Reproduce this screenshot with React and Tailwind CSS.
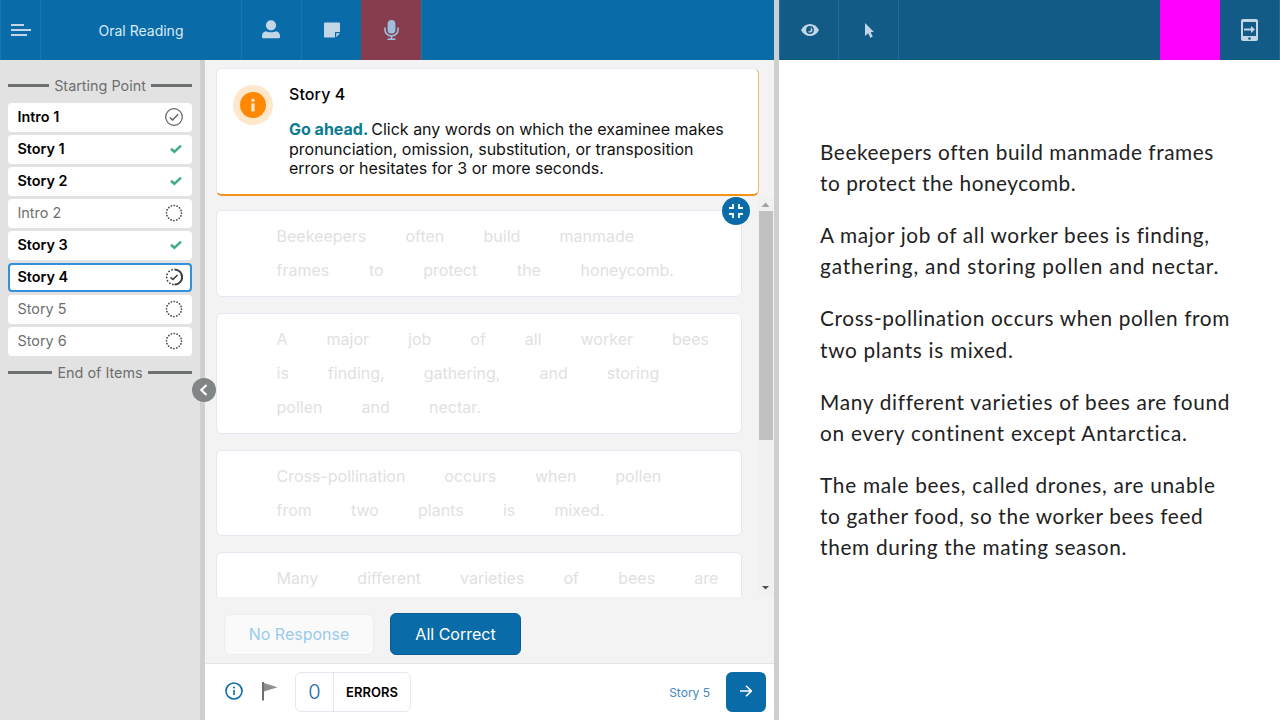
import React from "react";

const items = [
  { label: "Intro 1", state: "seen" },
  { label: "Story 1", state: "done" },
  { label: "Story 2", state: "done" },
  { label: "Intro 2", state: "todo" },
  { label: "Story 3", state: "done" },
  { label: "Story 4", state: "current" },
  { label: "Story 5", state: "todo" },
  { label: "Story 6", state: "todo" },
];

const sentences = [
  [
    ["Beekeepers often build manmade", "gap-[39.2px]"],
    ["frames to protect the honeycomb.", "gap-[39.7px]"],
  ],
  [
    ["A major job of all worker bees", "gap-[39px]"],
    ["is finding, gathering, and storing", "gap-[39px]"],
    ["pollen and nectar.", "gap-[39.2px]"],
  ],
  [
    ["Cross-pollination occurs when pollen", "gap-[38.9px]"],
    ["from two plants is mixed.", "gap-[39.2px]"],
  ],
  [["Many different varieties of bees are", "gap-[39.2px]"]],
];

const passage = [
  [
    ["Beekeepers often build manmade frames", "tracking-[0.58px]"],
    ["to protect the honeycomb.", "tracking-[0.54px]"],
  ],
  [
    ["A major job of all worker bees is finding,", "tracking-[0.66px]"],
    ["gathering, and storing pollen and nectar.", "tracking-[0.82px]"],
  ],
  [
    ["Cross-pollination occurs when pollen from", "tracking-[0.62px]"],
    ["two plants is mixed.", "tracking-[0.69px]"],
  ],
  [
    ["Many different varieties of bees are found", "tracking-[0.69px]"],
    ["on every continent except Antarctica.", "tracking-[0.77px]"],
  ],
  [
    ["The male bees, called drones, are unable", "tracking-[0.73px]"],
    ["to gather food, so the worker bees feed", "tracking-[0.63px]"],
    ["them during the mating season.", "tracking-[0.69px]"],
  ],
];

function StateIcon({ state }) {
  if (state === "done")
    return (
      <svg className="mr-[1px] h-3 w-3" viewBox="0 0 12 12" fill="none">
        <path d="M1 5.8L4.4 8.8L11 2.6" stroke="#40ad80" strokeWidth="2.5" />
      </svg>
    );
  if (state === "seen")
    return (
      <svg className="h-[18px] w-[18px]" viewBox="0 0 18 18" fill="none" stroke="#5f6363">
        <circle cx="9" cy="9" r="8.3" strokeWidth="1.2" />
        <path d="M4.8 9.5L7.5 12L13.2 6.3" strokeWidth="1.5" />
      </svg>
    );
  if (state === "current")
    return (
      <svg className="h-[18px] w-[18px]" viewBox="0 0 18 18" fill="none" stroke="#3d3d3d">
        <path d="M9.5 1.4A7.6 7.6 0 0 1 9.5 16.6" strokeWidth="2" />
        <path d="M8 16.5A7.6 7.6 0 0 1 8 1.5" strokeWidth="1.7" strokeLinecap="round" strokeDasharray="0.2 3.1" />
        <path d="M5.6 9.3L8 11.5L12.5 7" strokeWidth="1.6" />
      </svg>
    );
  return (
    <svg className="h-[18px] w-[18px]" viewBox="0 0 18 18" fill="none">
      <circle cx="9" cy="9" r="7.5" stroke="#444" strokeWidth="1.7" strokeLinecap="round" strokeDasharray="0.1 2.845" />
    </svg>
  );
}

function Marker({ children }) {
  return (
    <div className="flex h-[17px] items-center gap-[5px] text-[14.4px] leading-[17px] text-[#6d7070]">
      <span className="h-[3px] flex-1 bg-[#6d7070]" />
      <span>{children}</span>
      <span className="h-[3px] flex-1 bg-[#6d7070]" />
    </div>
  );
}

function Sidebar() {
  return (
    <aside className="relative h-full w-[205px] shrink-0 border-r-[5px] border-[#cfcfcf] bg-[#e2e2e2] px-2 pt-[16.5px]">
      <Marker>Starting Point</Marker>
      <ul className="mt-[9px] flex flex-col gap-[3px]">
        {items.map((it) => (
          <li
            key={it.label}
            className={
              "flex h-[29px] items-center justify-between rounded-[4px] border-2 bg-white pl-[7.5px] pr-[7px] text-[14.4px] leading-none " +
              (it.state === "current" ? "border-[#3490dc] " : "border-white ") +
              (it.state === "todo" ? "text-[#6d7070]" : "font-semibold text-black")
            }
          >
            <span>{it.label}</span>
            <StateIcon state={it.state} />
          </li>
        ))}
      </ul>
      <div className="mt-2">
        <Marker>End of Items</Marker>
      </div>
      <button className="absolute left-[192px] top-[317.5px] z-10 flex h-6 w-6 items-center justify-center rounded-full bg-[#828585]">
        <svg className="h-3 w-3" viewBox="0 0 12 12" fill="none">
          <path d="M8.5 1L3.3 6L8.5 11" stroke="#fff" strokeWidth="2.2" />
        </svg>
      </button>
    </aside>
  );
}

function TopBar() {
  return (
    <header className="flex h-[60px] shrink-0 bg-[#096ca9] text-[#c3d6e5]">
      <div className="flex w-[41px] items-center justify-center border-x border-[#1b77b1]">
        <svg className="h-3 w-5" viewBox="0 0 20 12">
          <path d="M0 1h13M0 6h20M0 11h16" stroke="currentColor" strokeWidth="1.8" />
        </svg>
      </div>
      <div className="flex w-[201px] items-center justify-center border-r border-[#1b77b1] text-[14px] text-[#dceaf5]">
        Oral Reading
      </div>
      <div className="flex w-[60px] items-center justify-center border-r border-[#1b77b1] pr-[2px]">
        <svg className="mt-[-2px] h-[19px] w-[18px]" viewBox="0 0 18 19" fill="currentColor">
          <circle cx="9" cy="5.3" r="5.1" />
          <path d="M4.2 11.2C6 12.5 12 12.5 13.8 11.2C16.5 11.6 18 13.4 18 16V17Q18 18.2 16.8 18.2H1.2Q0 18.2 0 17V16C0 13.4 1.5 11.6 4.2 11.2Z" />
        </svg>
      </div>
      <div className="flex w-[59px] items-center justify-center">
        <svg className="h-4 w-4" viewBox="0 0 16 16" fill="currentColor">
          <path d="M1 0.5H15Q16 0.5 16 1.5V10H11V15.5H1Q0 15.5 0 14.5V1.5Q0 0.5 1 0.5Z" />
          <path d="M12.2 11.2H16L12.2 15.2Z" />
        </svg>
      </div>
      <div className="flex w-[61px] items-center justify-center border-r border-[#1b77b1] bg-[#873d4e] text-[#9dbfdc]">
        <svg className="h-5 w-[15px]" viewBox="0 0 15 20">
          <rect x="3.6" y="0" width="7.8" height="13.6" rx="3.9" fill="currentColor" />
          <path d="M1 7.5V10A6.5 5.9 0 0 0 14 10V7.5M7.5 16V19M3.5 19.2H11.5" fill="none" stroke="currentColor" strokeWidth="1.6" />
        </svg>
      </div>
    </header>
  );
}

function InfoCard() {
  return (
    <section className="ml-[11px] mt-2 flex h-32 w-[543px] shrink-0 rounded-[6px] border border-[#e5e8f2] border-b-2 border-r-[#f3b871] border-b-[#f39320] bg-white">
      <div className="ml-4 mt-4 flex h-10 w-10 shrink-0 items-center justify-center rounded-full bg-[#ffe7cc]">
        <svg className="h-[26px] w-[26px]" viewBox="0 0 26 26">
          <circle cx="13" cy="13" r="13" fill="#ff8800" />
          <circle cx="13" cy="8.3" r="1.7" fill="#ffe7cc" />
          <rect x="11.4" y="11.4" width="3.2" height="8" fill="#ffe7cc" />
        </svg>
      </div>
      <div className="ml-4 flex flex-col pt-[15px]">
        <h1 className="text-[16px] font-medium leading-5 tracking-[0.1px] text-black">Story 4</h1>
        <div className="mt-4 whitespace-nowrap text-[16px] leading-[19.5px] text-[#111]">
          <p>
            <b className="mr-[3px] text-[#0a7d90]">Go ahead.</b>
            Click any words on which the examinee makes
          </p>
          <p>pronunciation, omission, substitution, or transposition</p>
          <p>errors or hesitates for 3 or more seconds.</p>
        </div>
      </div>
    </section>
  );
}

function WordArea() {
  return (
    <div className="relative h-[401px] shrink-0">
      <div className="flex h-full justify-between overflow-hidden pl-[11px]">
        <div className="flex w-[526px] flex-col gap-4 pt-[14px]">
          {sentences.map((lines) => (
            <div
              key={lines[0][0]}
              className="shrink-0 rounded-[6px] border border-[#e5e8f2] bg-white py-2 pl-[59.5px] last:h-[87px]"
            >
              {lines.map(([line, gap]) => (
                <div key={line} className={"flex h-[34.33px] items-center whitespace-nowrap text-[16px] text-[#e1e1e1] " + gap}>
                  {line.split(" ").map((w, i) => (
                    <span key={i}>{w}</span>
                  ))}
                </div>
              ))}
            </div>
          ))}
        </div>
        <div className="mr-px flex w-[15px] flex-col items-center bg-[#f1f1f1]">
          <svg className="h-[15px] w-[15px] shrink-0" viewBox="0 0 15 15">
            <path d="M3.5 11L7.5 6.5L11.5 11Z" fill="#a3a3a3" />
          </svg>
          <div className="h-[229px] w-[14px] bg-[#c1c1c1]" />
          <svg className="mt-auto h-4 w-[15px] shrink-0" viewBox="0 0 15 16">
            <path d="M4 5H11L7.5 8.5Z" fill="#505050" />
          </svg>
        </div>
      </div>
      <button className="absolute left-[517px] top-[1px] flex h-7 w-7 items-center justify-center rounded-full bg-[#096ca9]">
        <svg className="h-[14px] w-[14px]" viewBox="0 0 14 14" fill="none" stroke="#fff" strokeWidth="1.8">
          <path d="M4 0V4H0M10 0V4H14M4 14V10H0M10 14V10H14" />
        </svg>
      </button>
    </div>
  );
}

function Footer() {
  return (
    <footer className="mt-auto flex h-[57px] shrink-0 items-center border-t border-[#e3e5e8] bg-white pl-5 pr-2">
      <svg className="-mt-[3px] h-[18px] w-[18px]" viewBox="0 0 18 18">
        <circle cx="9" cy="9" r="8" fill="none" stroke="#096ca9" strokeWidth="1.6" />
        <circle cx="9" cy="5.4" r="1" fill="#096ca9" />
        <rect x="8.2" y="7.9" width="1.6" height="5.2" fill="#096ca9" />
      </svg>
      <svg className="-mt-[3px] ml-[19px] h-5 w-4" viewBox="0 0 16 20">
        <path d="M1 1V19.5" stroke="#6d7070" strokeWidth="2" />
        <path d="M2 2L15.5 6.3L2 10.5Z" fill="#8c8f8f" />
      </svg>
      <div className="ml-[17px] flex h-10 w-[116px] rounded-[6px] border border-[#e5e8f2]">
        <span className="flex w-[38px] items-center justify-center border-r border-[#e5e8f2] text-[20px] font-light text-[#1768b5]">0</span>
        <span className="flex flex-1 items-center justify-center pt-px text-[13px] font-semibold text-black">ERRORS</span>
      </div>
      <span className="ml-auto pt-[2px] text-[12px] text-[#4688c2]">Story 5</span>
      <button className="ml-4 flex h-10 w-10 items-center justify-center rounded-[6px] bg-[#096ca9]">
        <svg className="-mt-[2px] h-3 w-3" viewBox="0 0 12 12" fill="none" stroke="#fff" strokeWidth="1.6">
          <path d="M0 6H11M6 0.7L11.3 6L6 11.3" />
        </svg>
      </button>
    </footer>
  );
}

function StimulusPane() {
  return (
    <section className="flex min-w-0 flex-1 flex-col bg-white">
      <header className="flex h-[60px] border-l border-[#1b6ea6] bg-[#125b87] text-[#c3d6e5]">
        <div className="flex w-[59px] items-center justify-center border-r border-[#1b6ea6] pl-px">
          <svg className="mt-[-1px] h-3 w-[18px]" viewBox="0 0 18 12">
            <path d="M0 6C4-2 14-2 18 6C14 14 4 14 0 6Z" fill="currentColor" />
            <circle cx="9" cy="6" r="3.9" fill="#125b87" />
            <path d="M9 3.5A2.5 2.5 0 1 1 6.7 7A1.8 1.8 0 0 0 9 3.5Z" fill="currentColor" />
          </svg>
        </div>
        <div className="flex w-[60px] items-center justify-center border-r border-[#1b6ea6] pl-[2px]">
          <svg className="h-[15px] w-[9px]" viewBox="0 0 9 15" fill="currentColor">
            <path d="M0 0L9 9H5.7L7.7 13.7L5.2 14.7L3.3 10.2L0 13Z" />
          </svg>
        </div>
        <div className="ml-auto w-[60px] bg-[#ff00ff]" />
        <div className="flex w-[60px] items-center justify-center border-r border-[#1b6ea6]">
          <svg className="h-[22px] w-[17px]" viewBox="0 0 17 22">
            <rect width="17" height="22" rx="2" fill="currentColor" />
            <path d="M2 3H15V17H2Z" fill="#125b87" />
            <circle cx="8.5" cy="19.5" r="1.3" fill="#125b87" />
            <path d="M3 9.6H10V7L14 10.5L10 14V11.4H3Z" fill="currentColor" />
          </svg>
        </div>
      </header>
      <div className="flex flex-col gap-[20.8px] pl-[41px] pt-[76px] font-['Lato','Noto_Sans',sans-serif] text-[20.8px] leading-[31.2px] text-[#222]">
        {passage.map((lines) => (
          <p key={lines[0][0]}>
            {lines.map(([text, spacing]) => (
              <span key={text} className={"block whitespace-nowrap " + spacing}>
                {text}
              </span>
            ))}
          </p>
        ))}
      </div>
    </section>
  );
}

export default function App() {
  return (
    <div className="flex h-[720px] w-[1280px] overflow-hidden bg-white font-['Inter',sans-serif]">
      <div className="flex w-[774px] shrink-0 flex-col">
        <TopBar />
        <div className="flex min-h-0 flex-1">
          <Sidebar />
          <main className="flex min-w-0 flex-1 flex-col bg-[#f3f3f3]">
            <InfoCard />
            <WordArea />
            <div className="flex items-center gap-4 pl-[19px] pt-4">
              <button className="h-[41px] w-[150px] rounded-[6px] border border-[#ededed] bg-[#fafafa] text-[16px] text-[#9bcaec]">
                No Response
              </button>
              <button className="h-[42px] w-[131px] rounded-[6px] border border-[#095d91] bg-[#096ca9] text-[16px] text-white">
                All Correct
              </button>
            </div>
            <Footer />
          </main>
        </div>
      </div>
      <div className="w-[5px] shrink-0 bg-[#cfcfcf]" />
      <StimulusPane />
    </div>
  );
}
